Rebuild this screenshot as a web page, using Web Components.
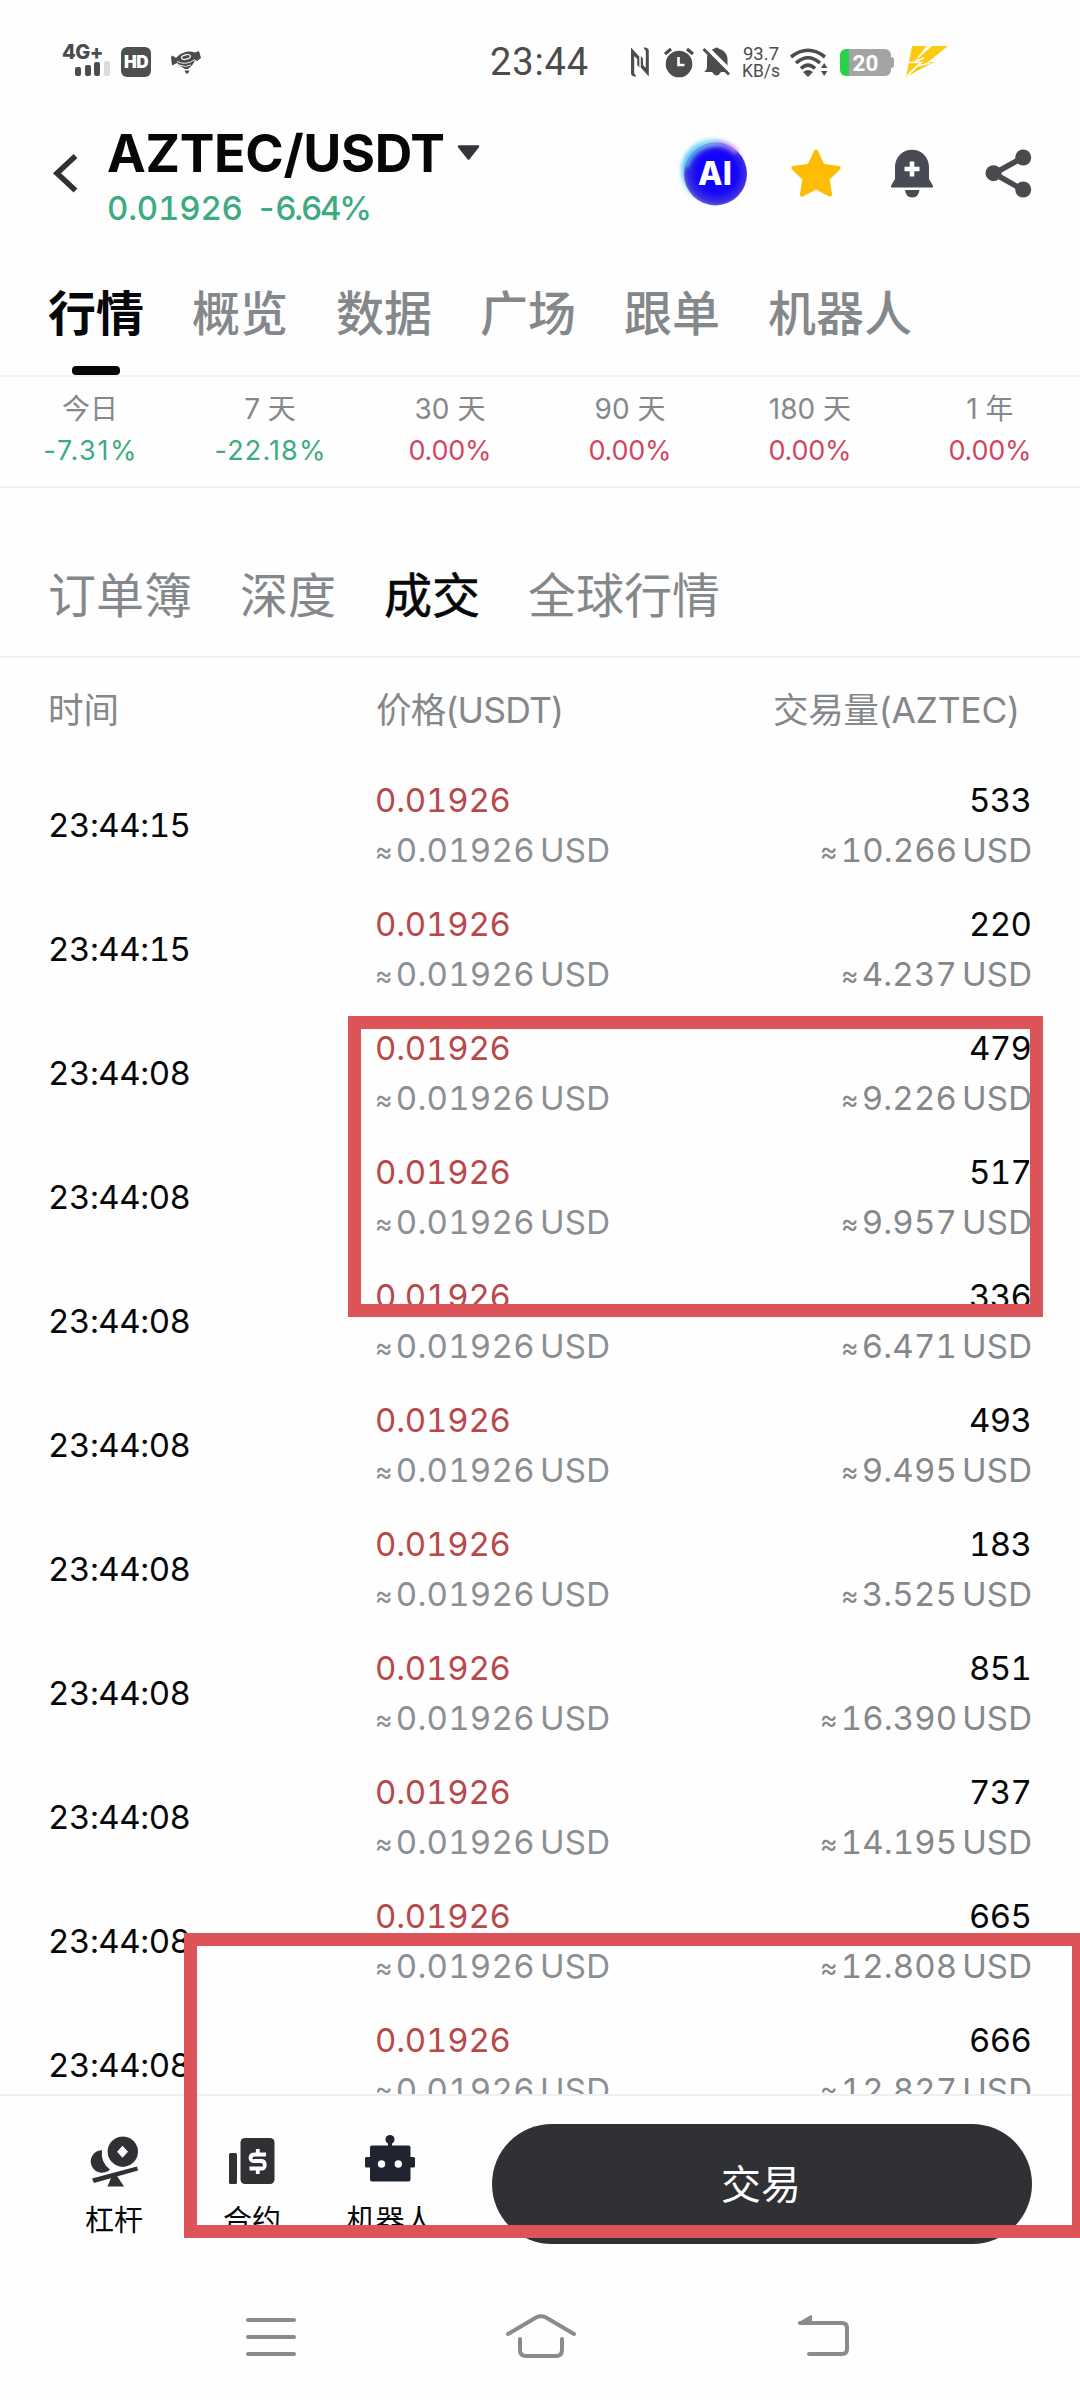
<!DOCTYPE html>
<html lang="zh-CN">
<head>
<meta charset="utf-8">
<title>AZTEC/USDT</title>
<style>
html,body{margin:0;padding:0;background:#fefefe}
body{width:1080px;height:2400px;overflow:hidden;font-family:Inter,"Noto Sans CJK SC",sans-serif;color:#060708}
</style>
</head>
<body>
<market-screen></market-screen>
<script>
class Base extends HTMLElement{
  constructor(){super();this.attachShadow({mode:'open'});}
  paint(css,html){this.shadowRoot.innerHTML=`<style>*{box-sizing:border-box}svg{display:block;flex:none;overflow:visible}${css}</style>${html}`;}
}

/* Text whose tracking is adjusted to fill the width given in "w". */
class FitText extends Base{
  connectedCallback(){
    this.paint(':host{display:inline-block;white-space:nowrap}span{display:inline-block;white-space:nowrap}','<span><slot></slot></span>');
    const s=this.shadowRoot.querySelector('span'),w=+this.getAttribute('w');
    if(!w)return;
    const n=this.textContent.length;
    const ls=(w-s.getBoundingClientRect().width)/(n-1);
    s.style.letterSpacing=ls+'px';s.style.marginRight=-ls+'px';
  }
}

class StatusBar extends Base{
  connectedCallback(){this.paint(`
  :host{display:flex;height:110px;align-items:flex-start;padding:44px 0 0 62px;color:#4c4c4c}
  .net{width:50px;height:33px;flex:none}
  .net b{display:block;font:800 20px/16px Inter;height:17px;letter-spacing:-.5px}
  .bars{display:flex;align-items:flex-end;gap:3.6px;height:15px;padding-left:13px}
  .bars i{width:6px;border-radius:2px;background:#4c4c4c}
  .hd{margin:3px 0 0 9px;width:30px;height:30px;border-radius:6px;background:#4f4f4f;color:#fff;font:900 17px/31px Inter;text-align:center;letter-spacing:-.5px}
  .time{margin-left:289px;width:98px;font:400 38px/37px Roboto;height:37px}
  .kb{margin:2px 0 0 12px;width:36px;height:34px;display:flex;flex-direction:column;align-items:center;font:400 18.500px/17px Roboto;white-space:nowrap}
  .kb div+div{font-size:17.500px}
  .bat{position:relative;margin:5px 0 0 12px;width:51px;height:27px;flex:none;border-radius:6px;background:linear-gradient(90deg,#28d146 9.5px,#a4a4a4 9.5px);color:#fff;font:700 22.500px/28px Roboto;text-align:center}
  .bat:after{content:"";position:absolute;left:51px;top:8px;width:3px;height:11px;border-radius:0 3px 3px 0;background:#a4a4a4}
  `,`
  <div class="net"><b>4G+</b><div class="bars"><i style="height:9px"></i><i style="height:11px"></i><i style="height:14px"></i><i style="height:15px;background:#dcdcdc"></i></div></div>
  <div class="hd">HD</div>
  <svg style="margin:7px 0 0 20px" width="30" height="23" viewBox="0 0 30 23" fill="#4c4c4c"><path d="M0 6L1.500 4.500 5 7C10 1 18-1 24 1.500L28 0l2 7-4 3-2-1c-1 3-3 6-7 9h-3c-4-2-7-5-8-6l-5 2.500z"/><path d="M13.500 19.500h5l-1.500 3h-2z"/><ellipse cx="15" cy="6" rx="4.500" ry="2.200" transform="rotate(-14 15 6)" fill="none" stroke="#fefefe" stroke-width="1.200"/><path d="M6 10.500Q15 15 24 8.500M8 14Q15 17 20 14" fill="none" stroke="#fefefe" stroke-width=".9"/></svg>
  <div class="time"><fit-text w="98">23:44</fit-text></div>
  <svg style="margin:3px 0 0 43px" width="18" height="30" viewBox="0 0 18 30" fill="#4c4c4c"><path d="M0 .5L8.300 9.500V20.500L6.200 18V12L3.200 9V26.500L5.500 29.500Q0 30 0 26z"/><path d="M17.800 29.500L9.800 20.500V9L12 11.500V18L14.800 21V4L12.300.5Q17.800 0 17.800 4z"/></svg>
  <svg style="margin:3px 0 0 15px" width="30" height="30" viewBox="0 0 30 30"><circle cx="15" cy="17" r="13.300" fill="#4c4c4c"/><path d="M1 7L7 2M29 7L23 2" stroke="#4c4c4c" stroke-width="3.200"/><path d="M14.500 10v8h6" fill="none" stroke="#fefefe" stroke-width="2.600"/></svg>
  <svg style="margin:3px 0 0 9px" width="28" height="30" viewBox="0 0 28 30"><path d="M1 25c3-2 3-4 3-8V12C4 6 7 3 10.500 2q3-3 6 0c4 1 8 5 8 10v5c0 4 0 6 2 8H18q-4.500 7-9 0z" fill="#4c4c4c"/><path d="M2.500-.5L28 25" stroke="#fefefe" stroke-width="4.500"/><path d="M.5 2L26 27.500" stroke="#4c4c4c" stroke-width="2.800"/></svg>
  <div class="kb"><div>93.7</div><div>KB/s</div></div>
  <svg style="margin:4px 0 0 11px" width="38" height="29" viewBox="0 0 38 29"><g fill="none" stroke="#4c4c4c" stroke-width="3.600"><path d="M1 9Q18 -4.500 35 9"/><path d="M6 15Q18 4.500 30 15"/><path d="M11 20.500Q18 13.500 25 20.500"/></g><path d="M13 24q5-4 10 0l-5 5z" fill="#4c4c4c"/><path d="M31 20l3.200-5 3.200 5zM31 23h6.400l-3.200 5z" fill="#4c4c4c"/></svg>
  <div class="bat">20</div>
  <svg style="margin:2px 0 0 15px" width="42" height="31" viewBox="0 0 42 31" fill="#fbcb12"><path d="M6 0h14.500L9 15 26 0h16L22 16h6L0 31z"/><path d="M2.500 16.500H15L1 30l10-10 13-3M8 16l10-4" fill="none" stroke="#fefefe" stroke-width="1.500"/></svg>
  `)}
}

class PairHeader extends Base{
  connectedCallback(){this.paint(`
  :host{display:flex;height:152px;align-items:flex-start}
  .back{margin:43px 0 0 53px}
  .pair{margin:15px 0 0 28px;width:577px;flex:none}
  .t{display:flex;height:58px;align-items:center;font:700 52px/58px Inter;color:#060708}
  .s{display:flex;font:500 33px/40px Inter;color:#3cab80;font-feature-settings:"tnum";margin-top:5px}
  .s fit-text+fit-text{margin-left:13px}
  `,`
  <svg class="back" width="26" height="40" viewBox="0 0 26 40" fill="none" stroke="#303135" stroke-width="5.500"><path d="M22.500 3L4 20.300L22.500 37.500"/></svg>
  <div class="pair"><div class="t"><fit-text w="338">AZTEC/USDT</fit-text><svg style="margin-left:12px;margin-top:-3px" width="23" height="16" viewBox="0 0 23 16"><path d="M2 1.500h19L11.500 13.500z" fill="#35363a" stroke="#35363a" stroke-width="2.600" stroke-linejoin="round"/></svg></div>
  <div class="s"><fit-text w="136">0.01926</fit-text><fit-text w="116">-6.64%</fit-text></div></div>
  <svg style="margin:27px 0 0 -4px" width="68" height="70" viewBox="0 0 68 70">
    <defs><radialGradient id="g" cx=".52" cy=".48" r=".53"><stop offset="0" stop-color="#0c00fa"/><stop offset=".6" stop-color="#1505fb"/><stop offset=".88" stop-color="#3b2fe0"/><stop offset="1" stop-color="#6a62e0"/></radialGradient>
    <linearGradient id="h" x1="0" y1=".3" x2="1" y2="0"><stop offset="0" stop-color="#58c8fa"/><stop offset=".5" stop-color="#8be0f4"/><stop offset=".8" stop-color="#c98cf5"/><stop offset="1" stop-color="#f2a8e8"/></linearGradient>
    <filter id="b" x="-.2" y="-.2" width="1.400" height="1.400"><feGaussianBlur stdDeviation="2"/></filter></defs>
    <circle cx="32.500" cy="33.500" r="31" fill="url(#h)" filter="url(#b)"/><circle cx="35.500" cy="37" r="31.500" fill="url(#g)"/>
    <path d="M6 30A31 31 0 0 1 57 15" fill="none" stroke="url(#h)" stroke-width="4" filter="url(#b)"/>
    <text x="35" y="48" text-anchor="middle" font-family="Inter" font-weight="800" font-size="32" fill="#fff">AI</text></svg>
  <svg style="margin:38px 0 0 42px" width="52" height="50" viewBox="0 0 52 50"><path d="M26 3.500l6.700 14.200 16 2.200-11.200 11 2.600 15.700L26 39.300 11.900 46.600 14.500 30.900 3.300 19.900l16-2.200z" fill="#fdbd05" stroke="#fdbd05" stroke-width="4" stroke-linejoin="round"/></svg>
  <svg style="margin:39px 0 0 48px" width="44" height="49" viewBox="0 0 44 49"><path d="M1.500 38.500Q.5 38 1.200 36.500L5 30V18C5 8 12.500.7 22 .7S39 8 39 18V30l3.800 6.500Q43.500 38 42.500 38.500z" fill="#484b54"/><path d="M15 41H29.500Q28.500 48.500 22.200 48.500T15 41z" fill="#484b54"/><path d="M22 12.500v15M14.500 20h15" stroke="#fff" stroke-width="4.600"/></svg>
  <svg style="margin:39px 0 0 51px" width="47" height="49" viewBox="0 0 47 49"><path d="M38 8.500L9 24.500L38 41" fill="none" stroke="#484a4f" stroke-width="5.500"/><circle cx="38.200" cy="8.500" r="8" fill="#484a4f"/><circle cx="8.500" cy="24.200" r="8" fill="#484a4f"/><circle cx="38.200" cy="40.500" r="8" fill="#484a4f"/></svg>
  `)}
}

class MainTabs extends Base{
  connectedCallback(){this.paint(`
  :host{display:flex;gap:48px;height:115px;padding:22px 48px 0;border-bottom:2px solid #f1f2f3;font:500 48px/60px Inter,"Noto Sans CJK SC",sans-serif;color:#85888b}
  div{display:flex;flex-direction:column;align-items:center;white-space:nowrap}
  .on{font-weight:700;color:#060708}
  .on:after{content:"";width:48px;height:9px;border-radius:4px;background:#060708;margin-top:22px}
  `,['行情','概览','数据','广场','跟单','机器人'].map((t,i)=>`<div class="${i?'':'on'}">${t}</div>`).join(''))}
}

class PeriodStats extends Base{
  connectedCallback(){
    const d=[['今日','-7.31%',93],['7 天','-22.18%',111],['30 天','0.00%',83],['90 天','0.00%',83],['180 天','0.00%',83],['1 年','0.00%',83]];
    this.paint(`
  :host{display:grid;grid-template-columns:repeat(6,1fr);height:111px;padding-top:10px;border-bottom:2px solid #f1f2f3;text-align:center}
  .l{font:400 28px/44px Inter,"Noto Sans CJK SC",sans-serif;color:#85888b;height:42px}
  .v{font:400 27px/44px Inter;color:#3cab80}
  .v.up{color:#cf4862}
  `,d.map(([l,v,w])=>`<div><div class="l">${l}</div><div class="v ${v[0]=='-'?'':'up'}"><fit-text w="${w}">${v}</fit-text></div></div>`).join(''))}
}

class SubTabs extends Base{
  connectedCallback(){this.paint(`
  :host{display:flex;gap:48px;height:170px;padding:78px 48px 0;border-bottom:2px solid #f1f2f3;font:400 48px/60px Inter,"Noto Sans CJK SC",sans-serif;color:#85888b}
  .on{-webkit-text-stroke:.6px #060708;color:#060708}
  `,['订单簿','深度','成交','全球行情'].map((t,i)=>`<div class="${i==2?'on':''}">${t}</div>`).join(''))}
}

class TradeRow extends Base{
  connectedCallback(){
    const [t,q,u]=['time','qty','usd'].map(k=>this.getAttribute(k));
    this.paint(`
  :host{display:flex;align-items:center;height:124px;padding:0 48px;font:400 33px/49px Inter;font-feature-settings:"tnum"}
  .t{width:327px}.p{flex:1}.q{text-align:right}
  .p div:first-child{color:#b8494b;height:50px}
  .q div:first-child{height:50px}
  .s{color:#8c8f92;word-spacing:-4px}
  .q .s{color:#85888a}
  i{font-style:normal;font-size:27px;vertical-align:1px;line-height:1px;margin-right:3px}
  `,`<div class="t"><fit-text w="143">${t}</fit-text></div>
  <div class="p"><div><fit-text w="136">0.01926</fit-text></div><div class="s"><fit-text w="235"><i style="margin-right:3px">≈</i>0.01926 USD</fit-text></div></div>
  <div class="q"><div><fit-text w="63">${q}</fit-text></div><div class="s"><fit-text w="${u.length>5?212:191}"><i>≈</i>${u} USD</fit-text></div></div>`)}
}

class TradeList extends Base{
  connectedCallback(){
    const d=[['15',533,'10.266'],['15',220,'4.237'],['08',479,'9.226'],['08',517,'9.957'],['08',336,'6.471'],['08',493,'9.495'],['08',183,'3.525'],['08',851,'16.390'],['08',737,'14.195'],['08',665,'12.808'],['08',666,'12.827']];
    this.paint(`
  :host{display:block;height:1436px;overflow:hidden}
  .h{display:flex;height:105px;padding:0 60px 0 48px;font:400 35.500px/105px Inter,"Noto Sans CJK SC",sans-serif;color:#85888b}
  .h div:first-child{width:328px}.h div:nth-child(2){flex:1}
  `,`<div class="h"><div>时间</div><div><fit-text w="188">价格(USDT)</fit-text></div><div><fit-text w="247">交易量(AZTEC)</fit-text></div></div>`
    +d.map(r=>`<trade-row time="23:44:${r[0]}" qty="${r[1]}" usd="${r[2]}"></trade-row>`).join(''))}
}

class ActionBar extends Base{
  connectedCallback(){this.paint(`
  :host{display:flex;height:166px;border-top:2px solid #eff1f1;padding:28px 48px 0 45px;align-items:flex-start}
  .i{width:138px;display:flex;flex-direction:column;align-items:center;font:400 29px/40px Inter,"Noto Sans CJK SC",sans-serif}
  .i svg{margin:8px 0 15px}
  button{margin-left:33px;width:540px;height:120px;border:0;border-radius:60px;background:#303135;color:#fff;font:400 40px/119px Inter,"Noto Sans CJK SC",sans-serif;padding:0 2px 0 0}
  `,`
  <div class="i"><svg width="50" height="54" viewBox="0 0 50 54" fill="#303135"><path d="M13 18.200A11.300 11.300 0 1 0 21 37.500A20.500 20.500 0 0 1 13 18.200z"/><path fill-rule="evenodd" d="M33.800 4.500a15.200 15.200 0 1 0 .01 0zM33.500 13.800l5.500 6-5.500 6-5.500-6z"/><path d="M3 46.500L48 34.500l1 4L5 51z"/><path d="M22 46l5-3.500 8 12H18.500z"/></svg><span>杠杆</span></div>
  <div class="i"><svg width="46" height="54" viewBox="0 0 46 54"><rect x="0" y="21" width="8" height="31" rx="1.500" fill="#303135"/><rect x="11.500" y="6" width="34" height="46" rx="4.500" fill="#303135"/><path d="M37 22.500H26Q21.500 22.500 21.500 26T26 29H32Q35.800 29 35.800 33T32 36.500H20.500M28.800 17v5M28.800 37v5" fill="none" stroke="#fff" stroke-width="3.800"/></svg><span>合约</span></div>
  <div class="i"><svg width="50" height="54" viewBox="0 0 50 54" fill="#202430"><circle cx="25" cy="7.500" r="4.500"/><path d="M23 8h4v8h-4z"/><rect x="5" y="13.500" width="40.500" height="36" rx="2"/><rect x="0" y="25" width="50" height="10.500" rx="1.500"/><circle cx="16.500" cy="32" r="3.700" fill="#fff"/><circle cx="33.300" cy="32" r="3.700" fill="#fff"/></svg><span>机器人</span></div>
  <button>交易</button>`)}
}

class SystemNav extends Base{
  connectedCallback(){this.paint(`
  :host{display:flex;height:140px;padding:54px 229px 0 245px}
  svg{fill:none;stroke:#8b8b8b;stroke-width:4;stroke-linecap:round;stroke-linejoin:round}
  `,`
  <svg width="52" height="44" viewBox="0 0 52 44"><path d="M3 6H49M3 23H49M3 40H49"/></svg>
  <svg width="72" height="46" viewBox="0 0 72 46" style="margin-left:208px"><path d="M3 20L31 3.500Q36 1 41 3.500L69 20M15 25V36Q15 42 21 42H51Q57 42 57 36V25"/></svg>
  <svg width="54" height="44" viewBox="0 0 54 44" style="margin-left:220px"><path d="M3 9H45Q50 9 50 14V35Q50 40 45 40H12"/><path d="M2 9L14 2V9z" fill="#8b8b8b" stroke-width="2"/></svg>`)}
}

/* Red frame laid over the list by the person who annotated it. */
class MarkFrame extends Base{
  connectedCallback(){this.paint(`:host{display:block;position:absolute;box-sizing:border-box;border:13px solid #dc5458;pointer-events:none}`,'')}
}

class MarketScreen extends Base{
  connectedCallback(){this.paint(`
  :host{display:block;position:relative;width:1080px;height:2400px;overflow:hidden;background:#fefefe}
  .a{left:348px;top:1016px;width:695px;height:301px}
  .b{left:184px;top:1933px;width:901px;height:305px}
  `,`<status-bar></status-bar><pair-header></pair-header><main-tabs></main-tabs><period-stats></period-stats><sub-tabs></sub-tabs><trade-list></trade-list><action-bar></action-bar><system-nav></system-nav><mark-frame class="a"></mark-frame><mark-frame class="b"></mark-frame>`)}
}
Object.entries({'fit-text':FitText,'status-bar':StatusBar,'pair-header':PairHeader,'main-tabs':MainTabs,'period-stats':PeriodStats,'sub-tabs':SubTabs,'trade-row':TradeRow,'trade-list':TradeList,'action-bar':ActionBar,'system-nav':SystemNav,'mark-frame':MarkFrame,'market-screen':MarketScreen}).forEach(([n,c])=>customElements.define(n,c));
</script>
</body>
</html>
